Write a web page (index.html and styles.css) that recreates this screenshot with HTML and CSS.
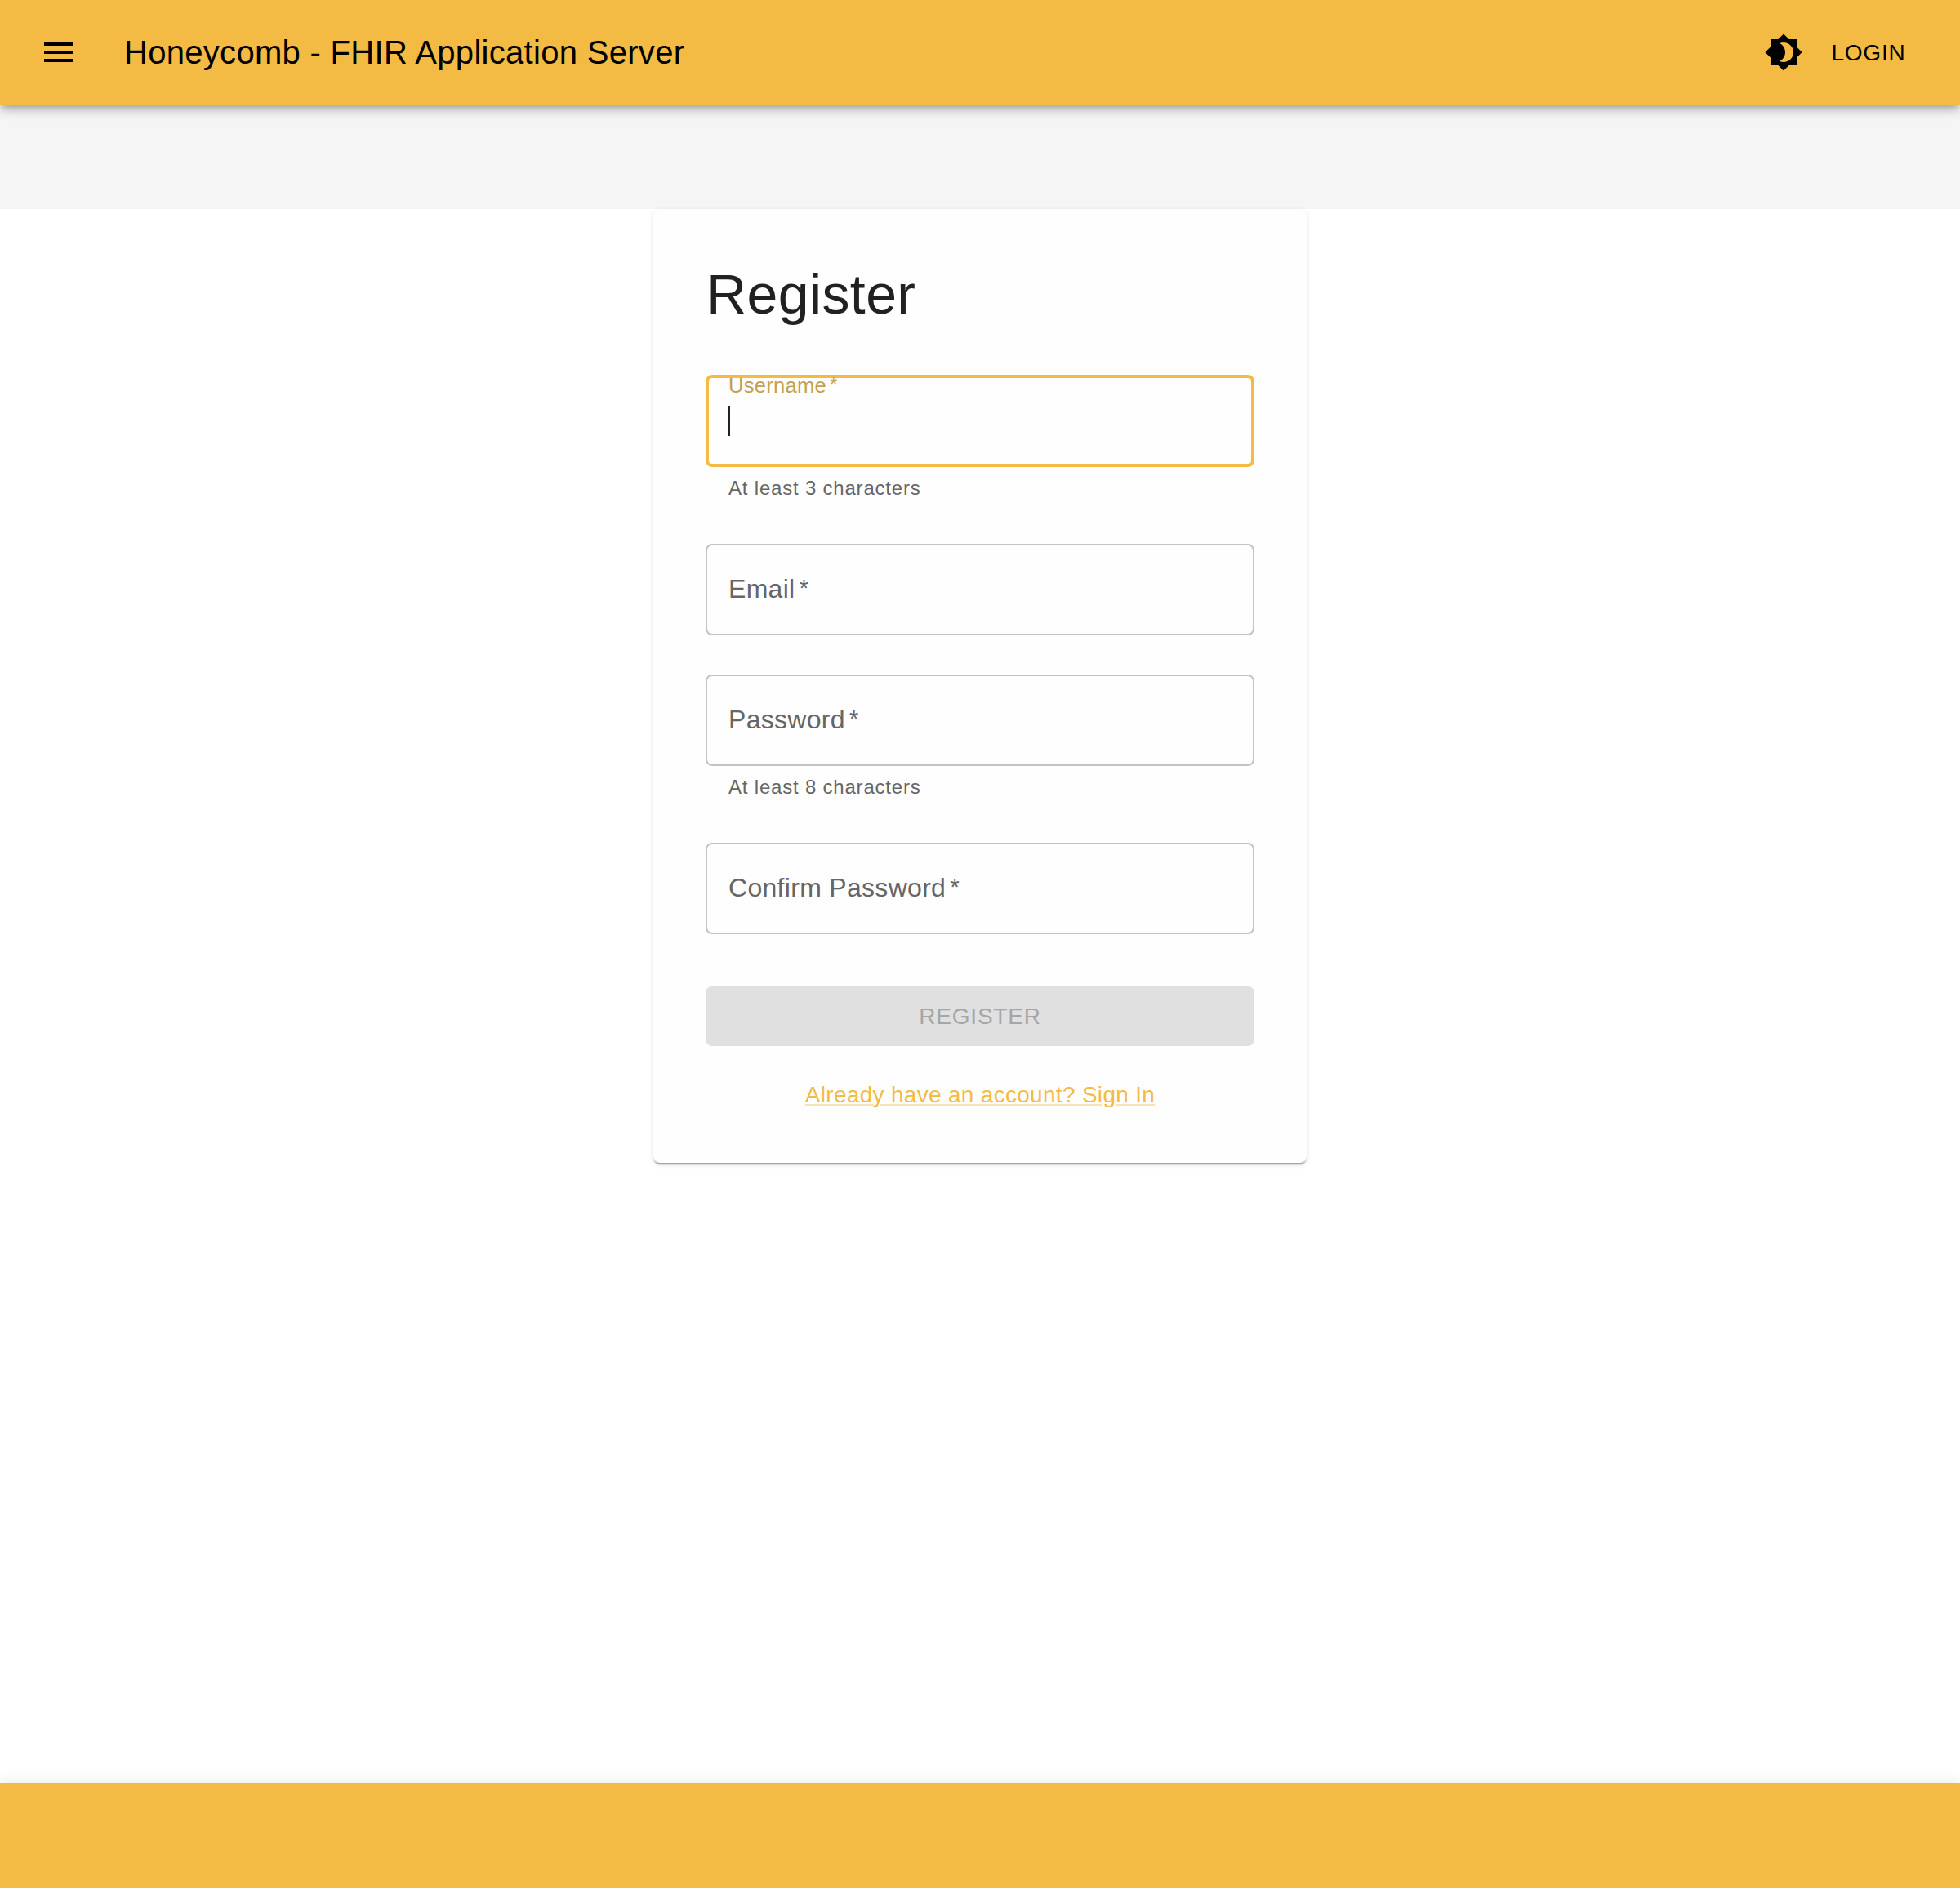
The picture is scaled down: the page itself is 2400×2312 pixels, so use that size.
FILE: index.html
```html
<!DOCTYPE html>
<html lang="en">
<head>
<meta charset="utf-8">
<title>Honeycomb - FHIR Application Server</title>
<link rel="stylesheet" href="styles.css">
</head>
<body>
<header class="app-bar">
  <button class="menu-button" aria-label="Menu">
    <svg class="icon" viewBox="0 0 24 24"><path d="M3 18h18v-2H3v2zm0-5h18v-2H3v2zm0-7v2h18V6H3z"/></svg>
  </button>
  <h1 class="app-title">Honeycomb - FHIR Application Server</h1>
  <button class="theme-button" aria-label="Toggle theme">
    <svg class="icon" viewBox="0 0 24 24"><path d="M20 8.69V4h-4.69L12 .69 8.69 4H4v4.69L.69 12 4 15.31V20h4.69L12 23.31 15.31 20H20v-4.69L23.31 12 20 8.69zM12 18c-.89 0-1.740-.2-2.500-.55C11.560 16.500 13 14.420 13 12s-1.440-4.500-3.500-5.450C10.260 6.200 11.110 6 12 6c3.310 0 6 2.690 6 6s-2.690 6-6 6z"/></svg>
  </button>
  <button class="login-button">LOGIN</button>
</header>
<div class="toolbar-spacer"></div>
<main class="content">
  <form class="card">
    <h2 class="card-title">Register</h2>
    <div class="field">
      <div class="input input-focused">
        <label class="label label-shrunk">Username<span class="required">*</span></label>
        <span class="caret"></span>
      </div>
      <p class="helper">At least 3 characters</p>
    </div>
    <div class="field">
      <div class="input"><label class="label">Email<span class="required">*</span></label></div>
    </div>
    <div class="field">
      <div class="input"><label class="label">Password<span class="required">*</span></label></div>
      <p class="helper">At least 8 characters</p>
    </div>
    <div class="field">
      <div class="input"><label class="label">Confirm Password<span class="required">*</span></label></div>
    </div>
    <button class="submit" disabled>REGISTER</button>
    <a class="sign-in" href="#">Already have an account? Sign In</a>
  </form>
</main>
<footer class="footer"></footer>
</body>
</html>
```
FILE: styles.css
```css
* {
  box-sizing: border-box;
}

body {
  margin: 0;
  min-height: 2312px;
  display: flex;
  flex-direction: column;
  background: #fff;
  color: #212121;
  font-family: "Liberation Sans", Helvetica, Arial, sans-serif;
}

h1, h2, p {
  margin: 0;
  font-weight: 400;
}

button {
  border: 0;
  padding: 0;
  background: none;
  color: inherit;
  font-family: inherit;
}

.app-bar,
.footer {
  position: relative;
  height: 128px;
  flex: none;
  background: #f3bb44;
  box-shadow: 0 4px 8px -2px rgba(0, 0, 0, .2), 0 8px 10px 0 rgba(0, 0, 0, .14), 0 2px 20px 0 rgba(0, 0, 0, .12);
}

.app-bar {
  display: flex;
  align-items: center;
  padding: 0 48px;
  color: #000;
}

.icon {
  display: block;
  width: 48px;
  height: 48px;
  fill: currentColor;
}

.menu-button {
  margin-right: 56px;
}

.app-title {
  flex: 1;
  font-size: 40px;
  line-height: 64px;
  letter-spacing: .3px;
}

.theme-button {
  margin-right: 16px;
}

.login-button {
  width: 128px;
  font-size: 28px;
  line-height: 49px;
  letter-spacing: .8px;
}

.toolbar-spacer {
  height: 128px;
  flex: none;
  background: #f5f5f5;
}

.content {
  flex: 1;
  display: flex;
  justify-content: center;
  align-items: flex-start;
}

.card {
  position: relative;
  width: 800px;
  height: 1168px;
  padding: 62px 64px 64px;
  display: flex;
  flex-direction: column;
  border-radius: 8px;
  background: #fefefe;
  box-shadow: 0 4px 2px -2px rgba(0, 0, 0, .2), 0 2px 2px 0 rgba(0, 0, 0, .14), 0 2px 6px 0 rgba(0, 0, 0, .12);
}

.card-title {
  margin-bottom: 57px;
  padding-left: 1px;
  font-size: 68px;
  line-height: 84px;
  letter-spacing: .4px;
}

.field {
  margin-bottom: 48px;
}

.input {
  display: flex;
  align-items: center;
  height: 112px;
  padding: 0 26px 2px;
  border: 2px solid #c3c3c3;
  border-radius: 8px;
}

.input-focused {
  position: relative;
  height: 113px;
  padding: 0 24px;
  border: 4px solid #f3bb44;
}

.label {
  color: #666;
  font-size: 32px;
  line-height: 46px;
  letter-spacing: .3px;
}

.label-shrunk {
  position: absolute;
  left: 24px;
  top: -9.5px;
  color: #c4a052;
  font-size: 25.6px;
  line-height: 36px;
  letter-spacing: .24px;
}

.required {
  margin-left: .18em;
  font-size: .9em;
  line-height: 1;
  vertical-align: .07em;
}

.caret {
  width: 2px;
  height: 37px;
  background: #212121;
}

.helper {
  margin: 6px 28px 0;
  color: #666;
  font-size: 24px;
  line-height: 40px;
  letter-spacing: .8px;
}

.submit {
  margin-top: 16px;
  height: 73px;
  flex: none;
  border-radius: 8px;
  background: #e0e0e0;
  color: #a6a6a6;
  font-size: 28px;
  line-height: 49px;
  letter-spacing: .8px;
}

.sign-in {
  align-self: center;
  margin-top: 40px;
  color: #f3bb44;
  font-size: 28px;
  line-height: 40px;
  letter-spacing: .3px;
  text-decoration: underline;
  text-decoration-color: rgba(243, 187, 68, .4);
  text-decoration-thickness: 2px;
  text-underline-offset: 2px;
}
```
